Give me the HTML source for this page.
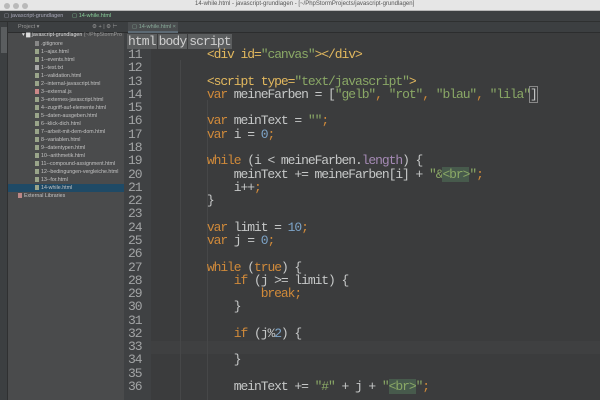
<!DOCTYPE html>
<html><head><meta charset="utf-8"><style>
*{margin:0;padding:0;box-sizing:border-box}
body{width:600px;height:400px;overflow:hidden;background:#3a3b3c;font-family:"Liberation Sans",sans-serif;position:relative}
.abs{position:absolute}
#title{left:0;top:0;width:600px;height:11px;background:#e6e6e6;border-bottom:1px solid #b8b8b8}
#title .d{position:absolute;top:3px;width:6px;height:6px;border-radius:50%;background:#b9b9b9}
#title .t{position:absolute;left:195px;top:1px;font-size:6px;color:#555;white-space:nowrap}
#nav{left:0;top:11px;width:600px;height:11px;background:#3d4042;border-bottom:1px solid #2e3030;font-size:5.5px;color:#aab;white-space:nowrap}
#tool{left:8px;top:22px;width:592px;height:11px;background:#3c3f41;border-bottom:1px solid #2c2d2e}
#strip{left:0;top:22px;width:8px;height:378px;background:#3c3f41;border-right:1px solid #2f3031}
#panel{left:8px;top:33px;width:116px;height:367px;background:#4a4b4c}
.row{position:absolute;left:0;width:116px;height:8px;font-size:5.3px;line-height:8px;color:#c4c4c4;white-space:nowrap}
.row i{display:inline-block;width:4px;height:5px;background:#9aa58a;margin-right:2px;vertical-align:-1px}
#gutter{left:124px;top:33px;width:27px;height:367px;background:#3f4143}
#editor{left:151px;top:33px;width:449px;height:367px;background:#3b3c3d}
#crumb{left:127px;top:35px;height:14px;font-family:"Liberation Mono",monospace;font-size:13px;letter-spacing:-0.9px;line-height:14px;color:#cfcfcf}
#crumb span{background:#5b5d5e;padding:0 1px;margin-right:1px}
.code{position:absolute;top:48px;font-family:"Liberation Mono",monospace;font-size:13px;letter-spacing:-1.07px;line-height:13.28px;white-space:pre;color:#c6c8c8}
.k{color:#d08a3a}.s{color:#8aa866}.n{color:#7da4c8}.tg{color:#e2b85e}.p{color:#a58ab5}.hl{background:#475a4c}
#cur{left:151px;top:341px;width:449px;height:13px;background:#3f4041}
.guide{position:absolute;width:1px;background:#464748}
</style></head><body>
<div id="title" class="abs"><div class="d" style="left:4px"></div><div class="d" style="left:13px"></div><div class="d" style="left:22px"></div><div class="t">14-while.html - javascript-grundlagen - [~/PhpStormProjects/javascript-grundlagen]</div></div>
<div id="nav" class="abs"><span style="position:absolute;left:4px;top:2px">▢ javascript-grundlagen</span><span style="position:absolute;left:72px;top:2px;color:#8c9">▢ 14-while.html</span></div>
<div id="tool" class="abs"><span style="position:absolute;left:10px;top:2px;font-size:5.5px;color:#999">Project ▾</span><span style="position:absolute;left:84px;top:2px;font-size:5.5px;color:#999">⚙ + | ⚙ ⊢</span>
<div style="position:absolute;left:120px;top:0;width:50px;height:11px;background:#4a4d4f;border-bottom:2px solid #5d6a74"><span style="position:absolute;left:4px;top:2px;font-size:5.5px;color:#8a9">▢ 14-while.html ×</span></div></div>
<div id="strip" class="abs"><div style="position:absolute;left:1px;top:5px;width:6px;height:26px;background:#5a5d5f"></div></div>
<div id="panel" class="abs">
<div class="row" style="top:-2px;left:14px;color:#ddd">▾ ▆ javascript-grundlagen <span style="color:#999">(~/PhpStormPro</span></div>
<div class="row" style="top:7px;left:27px"><i style="background:#888"></i>.gitignore</div>
<div class="row" style="top:15px;left:27px"><i></i>1--ajax.html</div>
<div class="row" style="top:23px;left:27px"><i></i>1--events.html</div>
<div class="row" style="top:31px;left:27px"><i style="background:#aaa"></i>1--test.txt</div>
<div class="row" style="top:39px;left:27px"><i></i>1--validation.html</div>
<div class="row" style="top:47px;left:27px"><i></i>2--internal-javascript.html</div>
<div class="row" style="top:55px;left:27px"><i style="background:#c88"></i>3--external.js</div>
<div class="row" style="top:63px;left:27px"><i></i>3--externes-javascript.html</div>
<div class="row" style="top:71px;left:27px"><i></i>4--zugriff-auf-elemente.html</div>
<div class="row" style="top:79px;left:27px"><i></i>5--daten-ausgeben.html</div>
<div class="row" style="top:87px;left:27px"><i></i>6--klick-dich.html</div>
<div class="row" style="top:95px;left:27px"><i></i>7--arbeit-mit-dem-dom.html</div>
<div class="row" style="top:103px;left:27px"><i></i>8--variablen.html</div>
<div class="row" style="top:111px;left:27px"><i></i>9--datentypen.html</div>
<div class="row" style="top:119px;left:27px"><i></i>10--arithmetik.html</div>
<div class="row" style="top:127px;left:27px"><i></i>11--compound-assignment.html</div>
<div class="row" style="top:135px;left:27px"><i></i>12--bedingungen-vergleiche.html</div>
<div class="row" style="top:143px;left:27px"><i></i>13--for.html</div>
<div class="row" style="top:151px;left:0;width:116px;padding-left:27px;background:#1f4a66"><i></i>14-while.html</div>
<div class="row" style="top:159px;left:10px"><i style="background:#b88"></i>External Libraries</div>
</div>
<div id="gutter" class="abs"></div>
<div id="editor" class="abs"></div>
<div id="cur" class="abs"></div>
<div class="guide" style="left:180px;top:60px;height:340px"></div>
<div class="guide" style="left:207px;top:100px;height:300px"></div>
<div id="crumb" class="abs"><span>html</span><span>body</span><span>script</span></div>
<div class="code" style="left:128px;color:#a2a4a5">11
12
13
14
15
16
17
18
19
20
21
22
23
24
25
26
27
28
29
30
31
32
33
34
35
36</div>
<div class="code" style="left:153px">        <span class="tg">&lt;div </span><span class="tg">id=</span><span class="s">"canvas"</span><span class="tg">&gt;&lt;/div&gt;</span>

        <span class="tg">&lt;script </span><span class="tg">type=</span><span class="s">"text/javascript"</span><span class="tg">&gt;</span>
        <span class="k">var</span> meineFarben = [<span class="s">"gelb"</span><span class="k">,</span> <span class="s">"rot"</span><span class="k">,</span> <span class="s">"blau"</span><span class="k">,</span> <span class="s">"lila"</span><span style="outline:1px solid #888">]</span>

        <span class="k">var</span> meinText = <span class="s">""</span><span class="k">;</span>
        <span class="k">var</span> i = <span class="n">0</span><span class="k">;</span>

        <span class="k">while</span> (i &lt; meineFarben.<span class="p">length</span>) {
            meinText += meineFarben[i] + <span class="s">"&amp;<span class="hl">&lt;br&gt;</span>"</span><span class="k">;</span>
            i++<span class="k">;</span>
        }

        <span class="k">var</span> limit = <span class="n">10</span><span class="k">;</span>
        <span class="k">var</span> j = <span class="n">0</span><span class="k">;</span>

        <span class="k">while</span> (<span class="k">true</span>) {
            <span class="k">if</span> (j &gt;= limit) {
                <span class="k">break;</span>
            }

            <span class="k">if</span> (j%<span class="n">2</span>) {

            }

            meinText += <span class="s">"#"</span> + j + <span class="s">"<span class="hl">&lt;br&gt;</span>"</span><span class="k">;</span></div>
</body></html>
